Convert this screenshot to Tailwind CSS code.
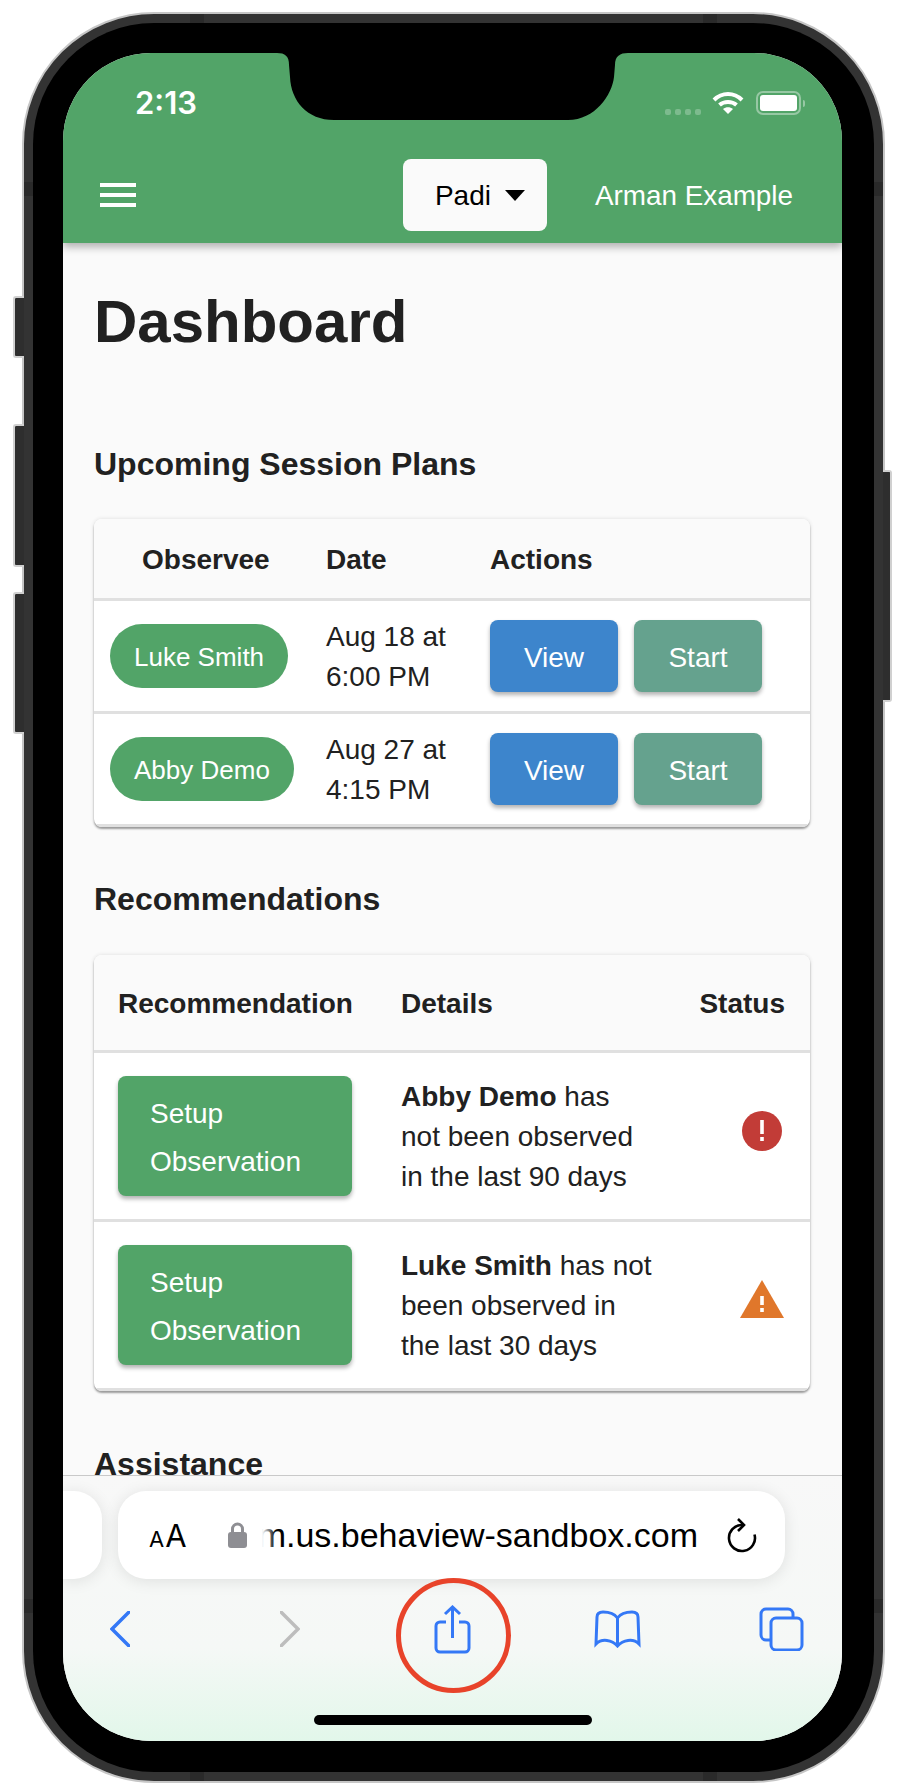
<!DOCTYPE html>
<html lang="en">
<head>
    <meta charset="UTF-8">
    <title>Dashboard</title>
    <script src="https://cdn.jsdelivr.net/npm/@tailwindcss/browser@4"></script>
</head>
<body class="bg-white overflow-hidden font-['Liberation_Sans',sans-serif]">
    <div class="w-[904px] h-[1785px] pt-[12px] pl-[22px]">
        <!-- phone frame -->
        <div class="relative w-[863px] h-[1771px] rounded-[132px] border-2 border-[#c6c6c6] bg-[#333333] p-[9px]">
            <!-- side buttons -->
            <div class="absolute -left-[11px] top-[282px] w-[11px] h-[62px] rounded-l-[3px] border-2 border-r-0 border-[#d0d0d0] bg-[#2e2e2e]"></div>
            <div class="absolute -left-[11px] top-[410px] w-[11px] h-[143px] rounded-l-[3px] border-2 border-r-0 border-[#d0d0d0] bg-[#2e2e2e]"></div>
            <div class="absolute -left-[11px] top-[578px] w-[11px] h-[142px] rounded-l-[3px] border-2 border-r-0 border-[#d0d0d0] bg-[#2e2e2e]"></div>
            <div class="absolute -right-[9px] top-[456px] w-[9px] h-[232px] rounded-r-[3px] border-2 border-l-0 border-[#d0d0d0] bg-[#2e2e2e]"></div>
            <!-- antenna bands -->
            <div class="absolute top-0 left-[166px] w-[14px] h-[9px] bg-[#2a2a2a]"></div>
            <div class="absolute top-0 right-[166px] w-[14px] h-[9px] bg-[#2a2a2a]"></div>
            <div class="absolute bottom-0 left-[166px] w-[14px] h-[9px] bg-[#2a2a2a]"></div>
            <div class="absolute bottom-0 right-[166px] w-[14px] h-[9px] bg-[#2a2a2a]"></div>
            <div class="absolute left-0 top-[168px] w-[9px] h-[14px] bg-[#2a2a2a]"></div>
            <div class="absolute right-0 top-[168px] w-[9px] h-[14px] bg-[#2a2a2a]"></div>
            <div class="absolute left-0 bottom-[168px] w-[9px] h-[14px] bg-[#2a2a2a]"></div>
            <div class="absolute right-0 bottom-[168px] w-[9px] h-[14px] bg-[#2a2a2a]"></div>

            <div class="rounded-[121px] bg-black p-[30px] h-full">
                <!-- screen -->
                <div class="relative flex flex-col w-[779px] h-[1688px] rounded-[88px] overflow-hidden bg-[#fafafa] text-[#212121]">
                    <!-- notch -->
                    <svg class="absolute left-[214px] top-0 z-20" width="351" height="67" viewBox="0 0 351 67"><path d="M0 0H351C343 0 338 3 338 12L337 24C335 42 318 67 291 67H57C30 67 14 48 13 24L12 12C12 3 8 0 0 0Z" fill="#000"/></svg>

                    <!-- app bar -->
                    <header class="relative z-10 h-[190px] shrink-0 bg-[#52a468] shadow-[0_4px_8px_rgba(0,0,0,0.3)] text-white">
                        <div class="flex items-end h-[24px] mt-[38px] pl-[72px] pr-[37px] font-['Inter',sans-serif]">
                            <span class="text-[31px] leading-[24px] font-semibold">2:13</span>
                            <div class="ml-auto flex items-center gap-[4px]">
                                <i class="w-[6px] h-[6px] rounded-[2px] bg-white/25"></i>
                                <i class="w-[6px] h-[6px] rounded-[2px] bg-white/25"></i>
                                <i class="w-[6px] h-[6px] rounded-[2px] bg-white/25"></i>
                                <i class="w-[6px] h-[6px] rounded-[2px] bg-white/25"></i>
                            </div>
                            <svg class="ml-[11px] mb-[1px]" width="32" height="23" viewBox="0 0 32 23" fill="none" stroke="#fff" stroke-width="4"><path d="M2 9C10 1 22 1 30 9"/><path d="M7.5 14C12 10 20 10 24.5 14"/><path d="M16 23L11 18C14 15.5 18 15.5 21 18Z" fill="#fff" stroke="none"/></svg>
                            <div class="ml-[12px] flex items-center">
                                <div class="w-[45px] h-[24px] rounded-[7px] border-2 border-white/40 p-[2px]"><div class="h-full rounded-[3px] bg-white"></div></div>
                                <div class="ml-[2px] w-[2px] h-[7px] rounded-r-full bg-white/40"></div>
                            </div>
                        </div>
                        <div class="flex items-center h-[72px] mt-[44px] pl-[37px] pr-[49px]">
                            <div class="flex flex-col gap-[6px] w-[36px]">
                                <div class="h-[4px] bg-white"></div>
                                <div class="h-[4px] bg-white"></div>
                                <div class="h-[4px] bg-white"></div>
                            </div>
                            <button class="ml-auto flex items-center w-[144px] h-[72px] pl-[32px] rounded-lg bg-[#fafafa] text-black text-[28px]">
                                <span class="pt-[2px]">Padi</span>
                                <svg class="ml-[14px]" width="20" height="11" viewBox="0 0 20 11"><path d="M0 0H20L10 11Z" fill="#000"/></svg>
                            </button>
                            <span class="ml-[48px] pt-[2px] text-[27.85px]">Arman Example</span>
                        </div>
                    </header>

                    <!-- page -->
                    <main class="flex-1 overflow-hidden pl-[31px] pr-[32px]">
                        <h1 class="mt-[43px] text-[60px] leading-[72px] font-bold">Dashboard</h1>

                        <h2 class="mt-[86px] text-[32px] leading-[40px] font-bold">Upcoming Session Plans</h2>
                        <div class="mt-[35px] rounded-lg overflow-hidden shadow-[0_2px_2px_rgba(0,0,0,0.35),0_0_4px_rgba(0,0,0,0.12)] bg-white">
                            <table class="w-[716px] table-fixed border-separate border-spacing-0 text-[28px] leading-[40px]">
                                <colgroup><col class="w-[216px]"><col class="w-[164px]"><col></colgroup>
                                <thead class="bg-[#fafafa]">
                                    <tr class="h-[82px]">
                                        <th class="pl-[48px] pt-[2px] text-left font-bold border-b-[3px] border-[#e0e0e0]">Observee</th>
                                        <th class="pl-[16px] pt-[2px] text-left font-bold border-b-[3px] border-[#e0e0e0]">Date</th>
                                        <th class="pl-[16px] pt-[2px] text-left font-bold border-b-[3px] border-[#e0e0e0]">Actions</th>
                                    </tr>
                                </thead>
                                <tbody>
                                    <tr class="h-[113px]">
                                        <td class="pl-[16px] border-b-[3px] border-[#e0e0e0]"><span class="inline-flex items-center h-[64px] px-[24px] pt-[2px] rounded-full bg-[#52a468] text-white text-[26px]">Luke Smith</span></td>
                                        <td class="pl-[16px] pt-[2px] border-b-[3px] border-[#e0e0e0]">Aug 18 at<br>6:00 PM</td>
                                        <td class="pl-[16px] border-b-[3px] border-[#e0e0e0]">
                                            <div class="flex gap-[16px]">
                                                <button class="w-[128px] h-[72px] pt-[3px] rounded-lg bg-[#3d85cc] text-white shadow-[0_3px_4px_rgba(0,0,0,0.3)]">View</button>
                                                <button class="w-[128px] h-[72px] pt-[3px] rounded-lg bg-[#65a28e] text-white shadow-[0_3px_4px_rgba(0,0,0,0.3)]">Start</button>
                                            </div>
                                        </td>
                                    </tr>
                                    <tr class="h-[113px]">
                                        <td class="pl-[16px] border-b-[3px] border-[#e0e0e0]"><span class="inline-flex items-center h-[64px] px-[24px] pt-[2px] rounded-full bg-[#52a468] text-white text-[26px]">Abby Demo</span></td>
                                        <td class="pl-[16px] pt-[2px] border-b-[3px] border-[#e0e0e0]">Aug 27 at<br>4:15 PM</td>
                                        <td class="pl-[16px] border-b-[3px] border-[#e0e0e0]">
                                            <div class="flex gap-[16px]">
                                                <button class="w-[128px] h-[72px] pt-[3px] rounded-lg bg-[#3d85cc] text-white shadow-[0_3px_4px_rgba(0,0,0,0.3)]">View</button>
                                                <button class="w-[128px] h-[72px] pt-[3px] rounded-lg bg-[#65a28e] text-white shadow-[0_3px_4px_rgba(0,0,0,0.3)]">Start</button>
                                            </div>
                                        </td>
                                    </tr>
                                </tbody>
                            </table>
                        </div>

                        <h2 class="mt-[52px] text-[32px] leading-[40px] font-bold">Recommendations</h2>
                        <div class="mt-[36px] rounded-lg overflow-hidden shadow-[0_2px_2px_rgba(0,0,0,0.35),0_0_4px_rgba(0,0,0,0.12)] bg-white">
                            <table class="w-[716px] table-fixed border-separate border-spacing-0 text-[28px] leading-[40px]">
                                <colgroup><col class="w-[307px]"><col class="w-[281px]"><col></colgroup>
                                <thead class="bg-[#fafafa]">
                                    <tr class="h-[98px]">
                                        <th class="pl-[24px] pt-[2px] text-left font-bold border-b-[3px] border-[#e0e0e0]">Recommendation</th>
                                        <th class="pt-[2px] text-left font-bold border-b-[3px] border-[#e0e0e0]">Details</th>
                                        <th class="pr-[25px] pt-[2px] text-right font-bold border-b-[3px] border-[#e0e0e0]">Status</th>
                                    </tr>
                                </thead>
                                <tbody>
                                    <tr class="h-[169px]">
                                        <td class="pl-[24px] border-b-[3px] border-[#e0e0e0]"><button class="block w-[234px] pt-[14px] pb-[10px] px-[32px] rounded-lg bg-[#52a468] text-white text-left leading-[48px] shadow-[0_3px_4px_rgba(0,0,0,0.3)]">Setup Observation</button></td>
                                        <td class="pt-[2px] border-b-[3px] border-[#e0e0e0]"><p class="w-[252px]"><b>Abby Demo</b> has not been observed in the last 90 days</p></td>
                                        <td class="pr-[28px] border-b-[3px] border-[#e0e0e0]">
                                            <svg class="block ml-auto mb-[10px]" width="40" height="40" viewBox="0 0 40 40"><circle cx="20" cy="20" r="20" fill="#c23c37"/><rect x="18.2" y="9" width="3.6" height="14" fill="#fff"/><rect x="18.2" y="26" width="3.6" height="4" fill="#fff"/></svg>
                                        </td>
                                    </tr>
                                    <tr class="h-[169px]">
                                        <td class="pl-[24px] border-b-[3px] border-[#e0e0e0]"><button class="block w-[234px] pt-[14px] pb-[10px] px-[32px] rounded-lg bg-[#52a468] text-white text-left leading-[48px] shadow-[0_3px_4px_rgba(0,0,0,0.3)]">Setup Observation</button></td>
                                        <td class="pt-[2px] border-b-[3px] border-[#e0e0e0]"><p class="w-[252px]"><b>Luke Smith</b> has not been observed in the last 30 days</p></td>
                                        <td class="pr-[26px] border-b-[3px] border-[#e0e0e0]">
                                            <svg class="block ml-auto mb-[12px]" width="44" height="38" viewBox="0 0 44 38"><path d="M22 0L44 38H0Z" fill="#e0772b"/><rect x="20.2" y="16" width="3.6" height="9" fill="#fff"/><rect x="20.2" y="28" width="3.6" height="4" fill="#fff"/></svg>
                                        </td>
                                    </tr>
                                </tbody>
                            </table>
                        </div>

                        <h2 class="mt-[53px] text-[32px] leading-[40px] font-bold">Assistance</h2>
                    </main>

                    <!-- safari toolbar -->
                    <div class="relative z-10 h-[266px] shrink-0 border-t border-[#c9c9c9] bg-linear-to-b from-[#f8f8f8] via-[#f5f8f6] via-65% to-[#e2f7ea] font-['Inter',sans-serif]">
                        <div class="flex gap-[16px] mt-[15px] h-[88px]">
                            <div class="w-[39px] rounded-r-[28px] bg-white shadow-[0_2px_16px_rgba(0,0,0,0.1)]"></div>
                            <div class="flex items-center w-[667px] rounded-[28px] bg-white shadow-[0_2px_16px_rgba(0,0,0,0.1)] text-black">
                                <span class="ml-[31px] flex items-baseline w-[38px] leading-none">
                                    <span class="text-[22px]">A</span><span class="ml-[1px] text-[31px]">A</span>
                                </span>
                                <svg class="ml-[41px]" width="19" height="26" viewBox="0 0 19 26"><path d="M4.5 11V7a5 5 0 0 1 10 0v4" fill="none" stroke="#8e8e93" stroke-width="3"/><rect y="10" width="19" height="16" rx="3" fill="#8e8e93"/></svg>
                                <div class="relative flex justify-end ml-[15px] w-[436px] overflow-hidden whitespace-nowrap font-['Liberation_Sans',sans-serif] text-[34px] leading-[40px]">
                                    <span class="shrink-0">m.us.behaview-sandbox.com</span>
                                    <div class="absolute inset-y-0 left-0 w-[14px] bg-linear-to-r from-white to-white/0"></div>
                                </div>
                                <svg class="ml-[29px]" width="30" height="36" viewBox="0 0 30 36" fill="none" stroke="#000" stroke-width="2.6"><path d="M15 8A13 13 0 1 0 27.5 17.5"/><path d="M11 2L17 8L11 14"/></svg>
                            </div>
                        </div>
                        <div class="flex items-center h-[52px] mt-[24px] text-[#3478f6]">
                            <svg class="ml-[47px]" width="20" height="36" viewBox="0 0 20 36" fill="none" stroke="currentColor" stroke-width="3.5" stroke-linecap="round"><path d="M19 1L2 18L19 35"/></svg>
                            <svg class="ml-[150px] text-[#bdbdbd]" width="20" height="36" viewBox="0 0 20 36" fill="none" stroke="currentColor" stroke-width="3.5" stroke-linecap="round"><path d="M1 1L18 18L1 35"/></svg>
                            <svg class="ml-[134px]" width="37" height="49" viewBox="0 0 37 49" fill="none" stroke="currentColor" stroke-width="3"><path d="M12 17H6a4 4 0 0 0-4 4V43a4 4 0 0 0 4 4H31a4 4 0 0 0 4-4V21a4 4 0 0 0-4-4H25"/><path d="M18.5 33V2M11 9L18.5 2L26 9"/></svg>
                            <svg class="ml-[123px]" width="47" height="38" viewBox="0 0 47 38" fill="none" stroke="currentColor" stroke-width="3"><path d="M23.5 8C20 3 14 2 9 2C5 2 3 4 3 7L2 34C8 28 18 30 23.5 36C29 30 39 28 45 34L44 7C44 4 42 2 38 2C33 2 27 3 23.5 8V36"/></svg>
                            <svg class="ml-[118px]" width="45" height="44" viewBox="0 0 45 44" fill="none" stroke="currentColor" stroke-width="3"><path d="M34 11V7a5 5 0 0 0-5-5H7a5 5 0 0 0-5 5V28a5 5 0 0 0 5 5H12"/><rect x="12" y="11" width="31" height="32" rx="5"/></svg>
                        </div>
                        <div class="w-[278px] h-[10px] mt-[60px] ml-[251px] rounded-full bg-black"></div>
                        <!-- annotation ring -->
                        <div class="absolute left-[333px] top-[102px] w-[115px] h-[115px] rounded-full border-[5px] border-[#e8432a]"></div>
                    </div>
                </div>
            </div>
        </div>
    </div>
</body>
</html>
